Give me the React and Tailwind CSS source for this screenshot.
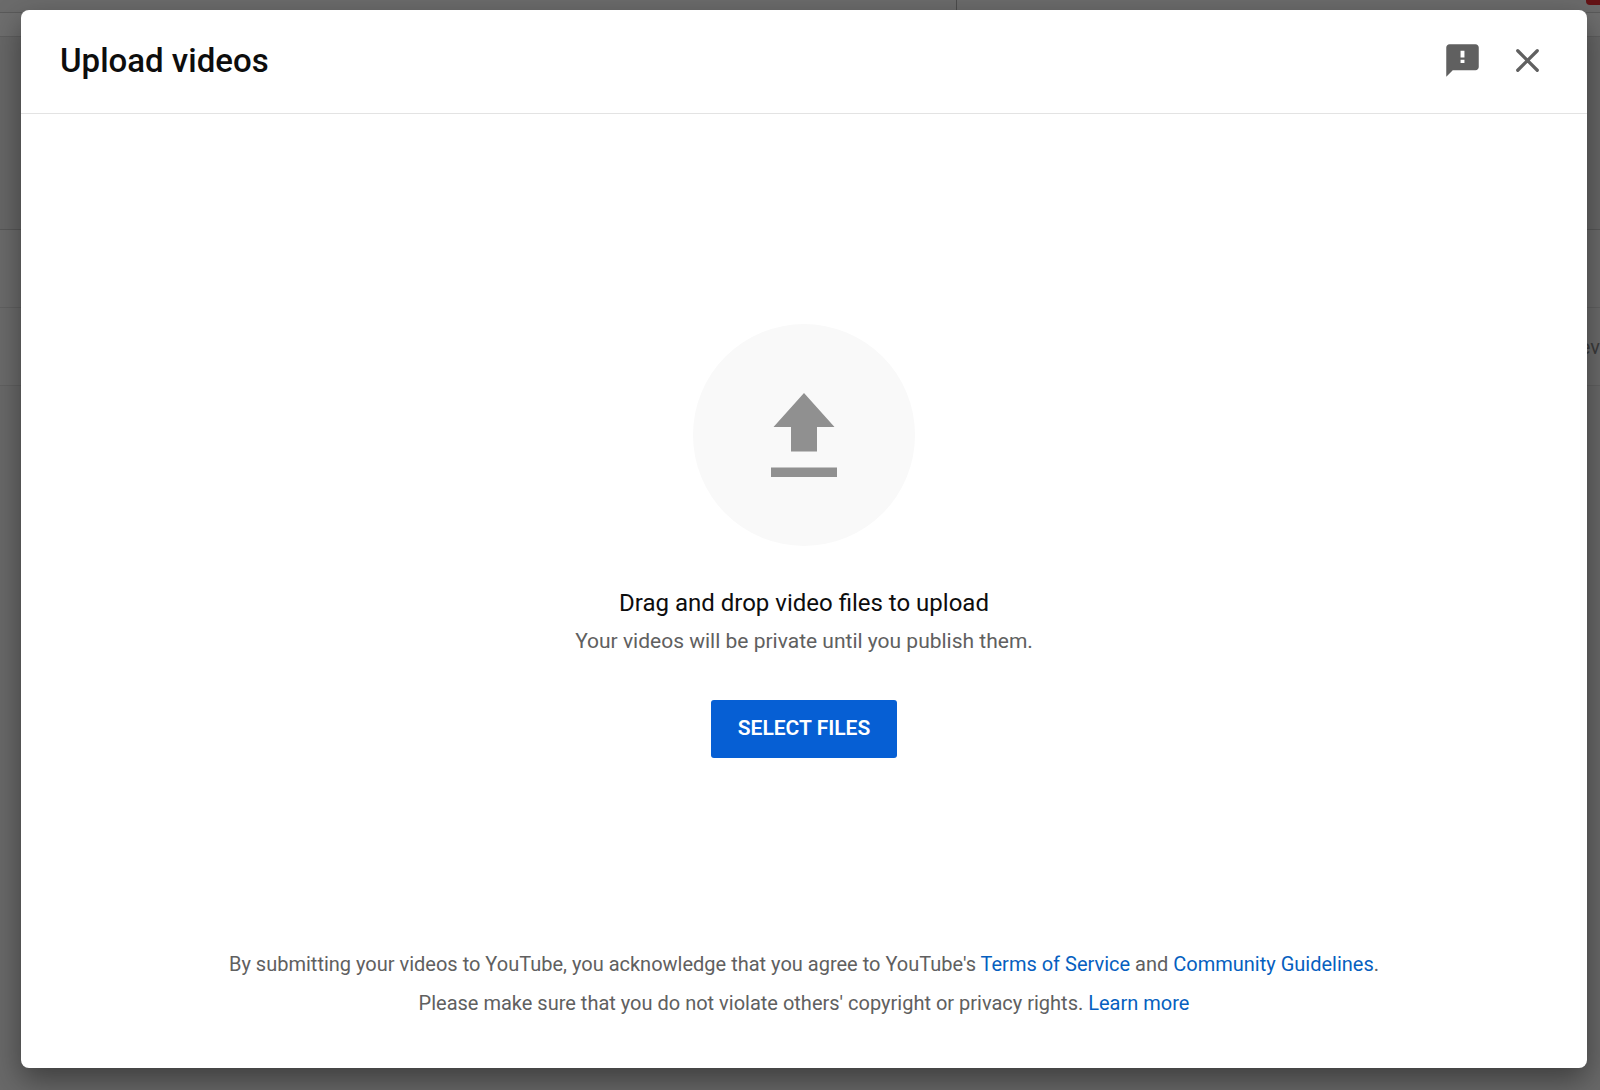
function FeedbackIcon() {
  return (
    <svg viewBox="0 0 24 24" className="size-[39px]" fill="currentColor" aria-hidden="true">
      <path d="M20 2H4c-1.1 0-1.990.9-1.990 2L2 22l4-4h14c1.100 0 2-.9 2-2V4c0-1.100-.9-2-2-2zm-6.800 11.500h-2.400v-2h2.400v2zm0-3.300h-2.400V6h2.400v4.200z" />
    </svg>
  );
}

function CloseIcon() {
  return (
    <svg viewBox="0 0 24 24" className="size-[39px]" fill="none" stroke="currentColor" strokeWidth="2" strokeLinecap="round" aria-hidden="true">
      <path d="M6 6l12 12M18 6L6 18" />
    </svg>
  );
}

function UploadIcon() {
  return (
    <svg viewBox="0 0 66 84" className="h-[84px] w-[66px]" fill="#909090" aria-hidden="true">
      <path d="M33 0l30.500 34H46v24.500H20V34H2.500z" />
      <path d="M0 74.500h66V84H0z" />
    </svg>
  );
}

function PageBehind() {
  return (
    <div className="col-start-1 row-start-1 flex flex-col bg-[#6b6b6b] text-xl text-[#3c3c3c]" aria-hidden="true">
      <div className="flex h-[13px] border-b border-[#5a5a5a]">
        <div className="w-[957px] border-r border-[#4c4c4c]" />
        <div className="flex flex-1 justify-end">
          <div className="h-[5px] w-[14px] rounded-bl-sm bg-[#641315]" />
        </div>
      </div>
      <div className="h-6 border-b border-[#5e5e5e] bg-[#6e6e6e]" />
      <div className="h-[193px] border-b border-[#585858] bg-[#676767]" />
      <div className="h-[78px] border-b border-[#616161]" />
      <div className="flex h-[78px] items-center justify-end border-b border-[#616161]">ev</div>
      <div className="flex-1 bg-[#696969]" />
    </div>
  );
}

function TextLink({ children }) {
  return (
    <a href="#" className="text-[#065fbf]">
      {children}
    </a>
  );
}

export default function App() {
  return (
    <div className="grid min-h-screen overflow-hidden font-[Roboto,sans-serif]">
      <PageBehind />
      <div
        role="dialog"
        aria-labelledby="dialog-title"
        className="z-10 col-start-1 row-start-1 mt-[10px] mr-[13px] mb-[22px] ml-[21px] flex flex-col rounded-lg bg-white shadow-[0_12px_30px_0_rgba(0,0,0,0.42)]"
      >
        <header className="flex h-[104px] items-center justify-between border-b border-[#e3e3e3] pr-10 pb-[2px] pl-[39px]">
          <h1 id="dialog-title" className="text-[33px] leading-10 font-medium text-[#0d0d0d]">
            Upload videos
          </h1>
          <div className="flex gap-[26px] text-[#606060]">
            <button type="button" aria-label="Send feedback">
              <FeedbackIcon />
            </button>
            <button type="button" aria-label="Close">
              <CloseIcon />
            </button>
          </div>
        </header>

        <main className="flex flex-1 flex-col items-center justify-center pt-[23px] text-center">
          <div className="flex size-[222px] items-center justify-center rounded-full bg-[#f9f9f9]">
            <UploadIcon />
          </div>
          <p className="mt-[39px] text-2xl leading-9 text-[#0d0d0d]">Drag and drop video files to upload</p>
          <p className="mt-1 text-[21px] leading-8 text-[#606060]">Your videos will be private until you publish them.</p>
          <button type="button" className="mt-[43px] h-[58px] rounded-[3px] bg-[#065fd4] px-[27px] text-[21px] font-semibold text-white">
            SELECT FILES
          </button>
        </main>

        <footer className="pb-[45px] text-center text-xl leading-[39px] text-[#606060]">
          <p>
            By submitting your videos to YouTube, you acknowledge that you agree to YouTube's <TextLink>Terms of Service</TextLink> and{" "}
            <TextLink>Community Guidelines</TextLink>.
          </p>
          <p>
            Please make sure that you do not violate others' copyright or privacy rights. <TextLink>Learn more</TextLink>
          </p>
        </footer>
      </div>
    </div>
  );
}
